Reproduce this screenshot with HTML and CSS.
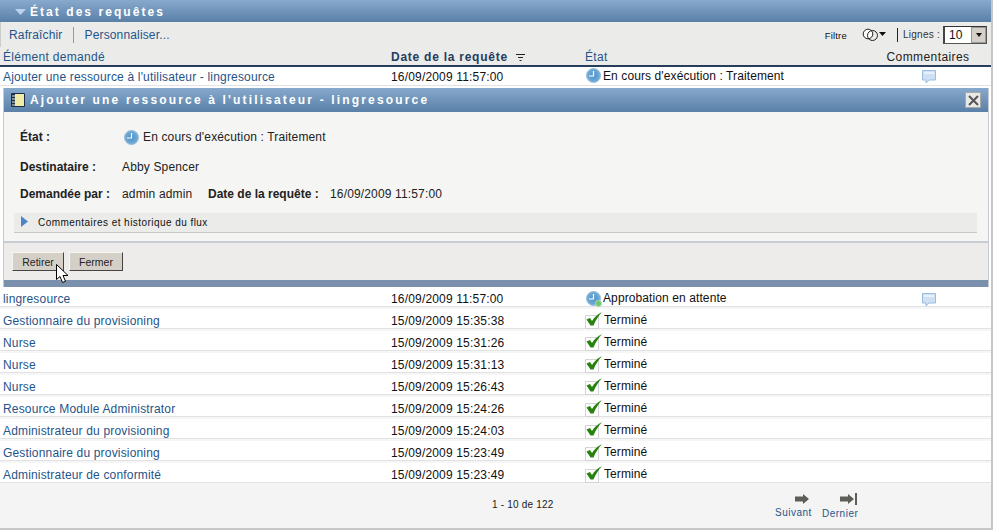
FILE: index.html
```html
<!DOCTYPE html>
<html lang="fr">
<head>
<meta charset="utf-8">
<title>État des requêtes</title>
<link rel="stylesheet" href="styles.css">
</head>
<body>
<svg class="defs" width="0" height="0">
  <defs>
    <radialGradient id="clk" cx="50%" cy="50%" r="55%"><stop offset="0" stop-color="#4f93c8"/><stop offset=".7" stop-color="#6aa6d4"/><stop offset="1" stop-color="#a9cde8"/></radialGradient>
    <symbol id="clock" viewBox="0 0 15 15"><circle cx="7.5" cy="7.5" r="7" fill="url(#clk)" stroke="#7aa8cc" stroke-width=".7"/><path d="M7.500 3v5H3" fill="none" stroke="#fff" stroke-width="1.2"/></symbol>
    <symbol id="check" viewBox="0 0 17 17"><path d="M.5 3.500h13v13H.5z" fill="#fff" stroke="#d4d4d4"/><path d="M1.500 7.500L5 6l2 3C9 5.500 12 2.500 17 0c-3.500 4-6.500 8.500-8.500 13.500H5.500z" fill="#27820e"/></symbol>
    <symbol id="bubble" viewBox="0 0 15 14"><path d="M.5.5h13v9.500H7l-3 3v-3H.5z" fill="#cfe0f4" stroke="#9dbde0"/><path d="M2 2h10v2H2z" fill="#e8f0fa"/></symbol>
    <symbol id="arrow" viewBox="0 0 15 10"><path d="M0 2.500h8V0l6 5-6 5V7.500H0z" fill="#5c5f58"/></symbol>
  </defs>
</svg>
<main class="portlet">
  <header class="title-bar">
    <svg class="title-caret" width="11" height="6" viewBox="0 0 11 6"><path d="M0 0h11L5.500 6z" fill="#b9d3ee"/></svg>
    <h1>État des requêtes</h1>
  </header>
  <div class="toolbar">
    <a class="tool-link tool-first">Rafraîchir</a>
    <a class="tool-link">Personnaliser...</a>
    <div class="tool-right">
      <span class="filter-label">Filtre</span>
      <svg class="filter-icon" width="25" height="14" viewBox="0 0 25 14"><circle cx="6" cy="6" r="4.800" fill="#fff" stroke="#222"/><circle cx="10.500" cy="7.500" r="5" fill="none" stroke="#222"/><path d="M17 4h7l-3.500 4z" fill="#111"/></svg>
      <span class="tool-sep"></span>
      <span class="lines-label">Lignes :</span>
      <span class="select"><span class="select-val">10</span><span class="select-btn"><i></i></span></span>
    </div>
  </div>
  <div class="row head">
    <a class="c1">Élément demandé</a>
    <span class="c2 sort-head">Date de la requête<svg class="sort-icon" width="9" height="7" viewBox="0 0 9 7"><path d="M0 .5h9M2 3.500h5M3.500 6.500h2" stroke="#222" fill="none"/></svg></span>
    <a class="c3">État</a>
    <span class="c4">Commentaires</span>
  </div>
  <div class="row first">
    <a class="c1">Ajouter une ressource à l'utilisateur - lingresource</a>
    <span class="c2">16/09/2009 11:57:00</span>
    <span class="c3 status"><svg class="ico-clock"><use href="#clock"/></svg>En cours d'exécution : Traitement</span>
    <span class="c4"><svg class="ico-bubble"><use href="#bubble"/></svg></span>
  </div>
  <section class="detail">
    <header class="detail-bar">
      <svg class="note" width="14" height="14" viewBox="0 0 14 14"><path d="M.5.5h13v13H.5z" fill="#f0eba8" stroke="#1c2c44"/><path d="M.5.5h3.500v13H.5z" fill="#1c3050"/><path d="M1 3h3M1 6h3M1 9h3M1 12h3" stroke="#e8e8c0"/></svg>
      <h2>Ajouter une ressource à l'utilisateur - lingresource</h2>
      <span class="close"><svg width="11" height="11" viewBox="0 0 11 11"><path d="M1 1l9 9M10 1l-9 9" stroke="#555" stroke-width="2"/></svg></span>
    </header>
    <div class="detail-body">
      <div class="field field-state"><b class="lbl-state">État :</b><svg class="ico-clock detail-clock"><use href="#clock"/></svg><span>En cours d'exécution : Traitement</span></div>
      <div class="field"><b class="lbl-dest">Destinataire :</b><span>Abby Spencer</span></div>
      <div class="field field-short"><b class="lbl-req">Demandée par :</b><span class="req-val">admin admin</span><b class="lbl-date">Date de la requête :</b><span>16/09/2009 11:57:00</span></div>
      <div class="flow"><svg class="flow-arrow" width="7" height="11" viewBox="0 0 7 11"><path d="M0 0l7 5.500L0 11z" fill="#4a86c8"/></svg><span>Commentaires et historique du flux</span></div>
    </div>
    <div class="actions">
      <button class="btn btn-retire">Retirer</button>
      <button class="btn">Fermer</button>
      <svg class="cursor" width="13" height="20" viewBox="0 0 13 20"><path d="M.5.500v15l3.500-3 2.500 6 3-1.200-2.500-5.800h5z" fill="#fff" stroke="#000"/></svg>
    </div>
  </section>
  <div class="row">
    <a class="c1">lingresource</a><span class="c2">16/09/2009 11:57:00</span>
    <span class="c3 status"><span class="clock-wrap"><svg class="ico-clock"><use href="#clock"/></svg><i class="dot"></i></span>Approbation en attente</span>
    <span class="c4"><svg class="ico-bubble"><use href="#bubble"/></svg></span>
  </div>
  <div class="row"><a class="c1">Gestionnaire du provisioning</a><span class="c2">15/09/2009 15:35:38</span><span class="c3 status"><svg class="ico-check"><use href="#check"/></svg>Terminé</span></div>
  <div class="row"><a class="c1">Nurse</a><span class="c2">15/09/2009 15:31:26</span><span class="c3 status"><svg class="ico-check"><use href="#check"/></svg>Terminé</span></div>
  <div class="row"><a class="c1">Nurse</a><span class="c2">15/09/2009 15:31:13</span><span class="c3 status"><svg class="ico-check"><use href="#check"/></svg>Terminé</span></div>
  <div class="row"><a class="c1">Nurse</a><span class="c2">15/09/2009 15:26:43</span><span class="c3 status"><svg class="ico-check"><use href="#check"/></svg>Terminé</span></div>
  <div class="row"><a class="c1">Resource Module Administrator</a><span class="c2">15/09/2009 15:24:26</span><span class="c3 status"><svg class="ico-check"><use href="#check"/></svg>Terminé</span></div>
  <div class="row"><a class="c1">Administrateur du provisioning</a><span class="c2">15/09/2009 15:24:03</span><span class="c3 status"><svg class="ico-check"><use href="#check"/></svg>Terminé</span></div>
  <div class="row"><a class="c1">Gestionnaire du provisioning</a><span class="c2">15/09/2009 15:23:49</span><span class="c3 status"><svg class="ico-check"><use href="#check"/></svg>Terminé</span></div>
  <div class="row"><a class="c1">Administrateur de conformité</a><span class="c2">15/09/2009 15:23:49</span><span class="c3 status"><svg class="ico-check"><use href="#check"/></svg>Terminé</span></div>
  <footer class="pager">
    <span class="count">1 - 10 de 122</span>
    <a class="page-link page-next"><svg class="arrow-ico"><use href="#arrow"/></svg>Suivant</a>
    <a class="page-link page-last"><span class="last-ico"><svg class="arrow-ico"><use href="#arrow"/></svg><i></i></span>Dernier</a>
  </footer>
</main>
</body>
</html>
```
FILE: styles.css
```css
* { box-sizing: border-box; }
html, body { margin: 0; padding: 0; background: #fff; }
body { width: 994px; height: 532px; overflow: hidden; font-family: "Liberation Sans", Arial, sans-serif; font-size: 12px; color: #111; }
.defs { position: absolute; }
a { color: #1f5489; }
h1, h2 { margin: 0; color: #fff; font-weight: bold; }
.portlet { width: 993px; height: 530px; background: #fff; border-right: 2px solid #c6c6c6; border-bottom: 2px solid #c6c6c6; display: flex; flex-direction: column; }
.title-bar { height: 22px; flex: none; display: flex; align-items: center; padding-left: 15px; background: linear-gradient(#87a9cc, #5a80a8); }
.title-caret { margin-right: 4px; margin-top: 2px; }
h1 { font-size: 12px; letter-spacing: 2.05px; padding-top: 1px; }
.toolbar { height: 25px; flex: none; display: flex; align-items: center; background: #ebebe9; padding-left: 8px; border-left: 1px solid #ccc; }
.tool-link { line-height: 16px; letter-spacing: .15px; }
.tool-first { padding-right: 10px; border-right: 1px solid #999; margin-right: 11px; }
.tool-right { margin-left: auto; display: flex; align-items: center; padding-right: 4px; }
.filter-label { font-size: 9.500px; letter-spacing: .2px; margin-right: 15px; padding-top: 1px; }
.filter-icon { margin-right: 10px; }
.tool-sep { width: 1px; height: 14px; background: #222; margin-right: 5px; }
.lines-label { font-size: 10px; letter-spacing: .25px; margin-right: 3px; color: #333; }
.select { width: 44px; height: 18px; display: flex; background: #fff; border: 1px solid #555; border-top-color: #333; border-left: 2px solid #444; }
.select-val { flex: 1; padding-left: 4px; line-height: 16px; }
.select-btn { width: 15px; background: #d4d0c8; border: 1px solid #999; display: flex; align-items: center; justify-content: center; }
.select-btn i { width: 0; height: 0; border: 3.500px solid transparent; border-top: 4px solid #111; border-bottom: 0; }
.row { height: 22px; flex: none; display: flex; align-items: center; background: #fff; border-bottom: 2px solid #f6f6f6; box-shadow: inset 0 -1px #e2e2e2; padding: 4px 0 0 3px; letter-spacing: .17px; }
.row.head { height: 20px; background: #ebebe9; border-bottom: 2px solid #283c5c; box-shadow: none; padding-top: 1px; }
.row.first { height: 19px; border-bottom: 1px solid #e2e2e2; box-shadow: none; padding-top: 1px; }
.c1 { width: 388px; flex: none; }
.c2 { width: 194px; flex: none; }
.c3 { width: 302px; flex: none; }
.c4 { flex: none; width: 84px; text-align: center; }
.head .c1, .head .c3 { letter-spacing: .3px; }
.head .c2 { font-weight: bold; color: #263c5e; letter-spacing: .75px; }
.head .c4 { color: #222; letter-spacing: .42px; margin-left: -1px; }
.sort-icon { margin-left: 8px; }
.status { display: flex; align-items: center; margin-top: -2px; letter-spacing: .1px; }
.ico-clock { width: 15px; height: 15px; flex: none; margin: 0 2px 0 1px; }
.ico-check { width: 17px; height: 17px; flex: none; margin: 1px 2px 0 0; }
.ico-bubble { width: 15px; height: 14px; display: block; margin: 1px 0 0 35px; }
.clock-wrap { position: relative; display: flex; }
.dot { position: absolute; left: 10px; top: 9px; width: 7px; height: 7px; border-radius: 50%; background: #6fc46f; border: 1px solid #a8e0a8; }
.detail { height: 199px; flex: none; margin: 2px 2px 0 3px; display: flex; flex-direction: column; border-left: 1px solid #c4c8d0; border-right: 1px solid #c4c8d0; background: #f5f5f3; }
.detail-bar { height: 24px; flex: none; display: flex; align-items: center; padding-left: 7px; background: linear-gradient(#87a9cc, #5a80a8); }
.note { margin-right: 5px; }
h2 { font-size: 12px; letter-spacing: 2.16px; }
.close { margin-left: auto; margin-right: 7px; width: 16px; height: 16px; display: flex; align-items: center; justify-content: center; background: #e8e8e6; border: 1px solid #a8a8a8; }
.detail-body { height: 131px; flex: none; padding: 0 11px 0 16px; border-bottom: 2px solid #c8ccd4; display: flex; flex-direction: column; }
.field { height: 30px; flex: none; display: flex; align-items: center; color: #222; letter-spacing: .15px; }
.field-state { margin-top: 10px; }
.field-short { height: 24px; }
.field b { letter-spacing: 0; color: #222; }
.lbl-state { width: 104px; }
.detail-clock { margin: 0 4px 0 0; }
.lbl-dest { width: 102px; }
.lbl-req { width: 102px; }
.req-val { width: 86px; }
.lbl-date { width: 122px; }
.flow { height: 20px; flex: none; margin: 7px 0 0 -6px; display: flex; align-items: center; background: #ebebe9; border-bottom: 1px solid #c8c8c8; font-size: 10px; letter-spacing: .45px; color: #111; padding-left: 7px; }
.flow-arrow { margin: -3px 10px 0 0; }
.actions { position: relative; flex: 1; display: flex; align-items: flex-start; padding: 9px 0 0 8px; gap: 5px; background: #edecea; border-bottom: 7px solid #7a90ac; }
.btn { height: 19px; width: 54px; padding: 0; font: 10.500px "Liberation Sans", Arial, sans-serif; color: #222; background: #d4d0c8; border: 1px solid; border-color: #f4f4f0 #444 #444 #f4f4f0; }
.btn-retire { width: 52px; }
.cursor { position: absolute; left: 52px; top: 21px; }
.pager { flex: 1; position: relative; display: flex; align-items: flex-start; background: #f4f4f4; padding-top: 14px; }
.count { font-size: 10px; letter-spacing: .2px; margin-left: 492px; color: #222; }
.page-link { position: absolute; top: 9px; display: flex; flex-direction: column; align-items: flex-end; font-size: 10px; letter-spacing: .5px; line-height: 12px; gap: 3px; }
.page-next { left: 775px; }
.page-next .arrow-ico { margin-right: 2px; }
.page-last { left: 822px; }
.arrow-ico { width: 15px; height: 10px; display: block; }
.last-ico { display: flex; margin-right: 1px; }
.last-ico i { width: 2px; height: 12px; background: #5c5f58; margin-top: -1px; }
```
